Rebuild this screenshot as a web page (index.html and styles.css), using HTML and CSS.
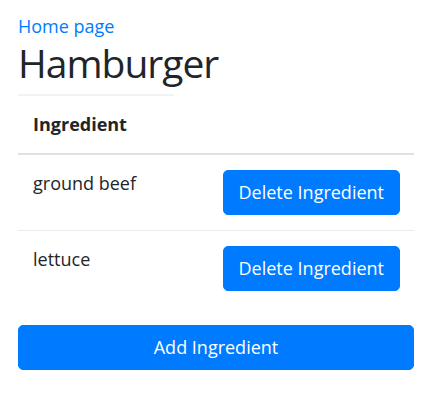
FILE: index.html
```html
<!DOCTYPE html>
<html lang="en">
<head>
<meta charset="utf-8">
<title>Hamburger</title>
<link rel="stylesheet" href="styles.css">
</head>
<body>
<div class="container">
  <a class="home-link" href="#">Home page</a>
  <h1 class="title">Hamburger</h1>
  <table class="ingredients">
    <colgroup><col class="col-name"><col class="col-action"></colgroup>
    <thead>
      <tr><th>Ingredient</th></tr>
    </thead>
    <tbody>
      <tr>
        <td>ground beef</td>
        <td class="action"><button class="btn" type="button">Delete Ingredient</button></td>
      </tr>
      <tr>
        <td>lettuce</td>
        <td class="action"><button class="btn" type="button">Delete Ingredient</button></td>
      </tr>
    </tbody>
  </table>
  <button class="btn btn-block" type="button">Add Ingredient</button>
</div>
</body>
</html>
```
FILE: styles.css
```css
html, body {
  margin: 0;
  padding: 0;
  background: #fff;
}
body {
  font-family: "Open Sans", "Noto Sans", sans-serif;
  font-size: 18px;
  color: #212529;
}
.container {
  padding: 14px 7px 0 18px;
}
.home-link {
  display: block;
  color: #007bff;
  text-decoration: none;
  line-height: 24px;
}
.title {
  margin: 0 0 7px;
  font-size: 39px;
  font-weight: 500;
  line-height: 49px;
  letter-spacing: -1px;
}
.ingredients {
  width: 100%;
  border-collapse: collapse;
  table-layout: fixed;
  margin-bottom: 19px;
}
.col-name { width: 156px; }
.ingredients th,
.ingredients td {
  padding: 14px 14px 14px 15px;
  line-height: 29px;
  vertical-align: top;
  text-align: left;
}
.ingredients th {
  font-weight: 700;
  border-top: 2px solid #f1f2f3;
}
.ingredients tbody td {
  border-top: 1px solid #e9ecef;
}
.ingredients tbody tr:first-child td {
  border-top: 2px solid #dee2e6;
}
.ingredients td.action {
  text-align: right;
  padding-top: 15px;
  padding-bottom: 15px;
}
.btn {
  font: inherit;
  color: #fff;
  background: #007bff;
  border: 1px solid #007bff;
  border-radius: 5px;
  height: 45px;
  padding: 0 15px;
  line-height: 43px;
  cursor: pointer;
}
.btn-block {
  display: block;
  width: 100%;
}
```
